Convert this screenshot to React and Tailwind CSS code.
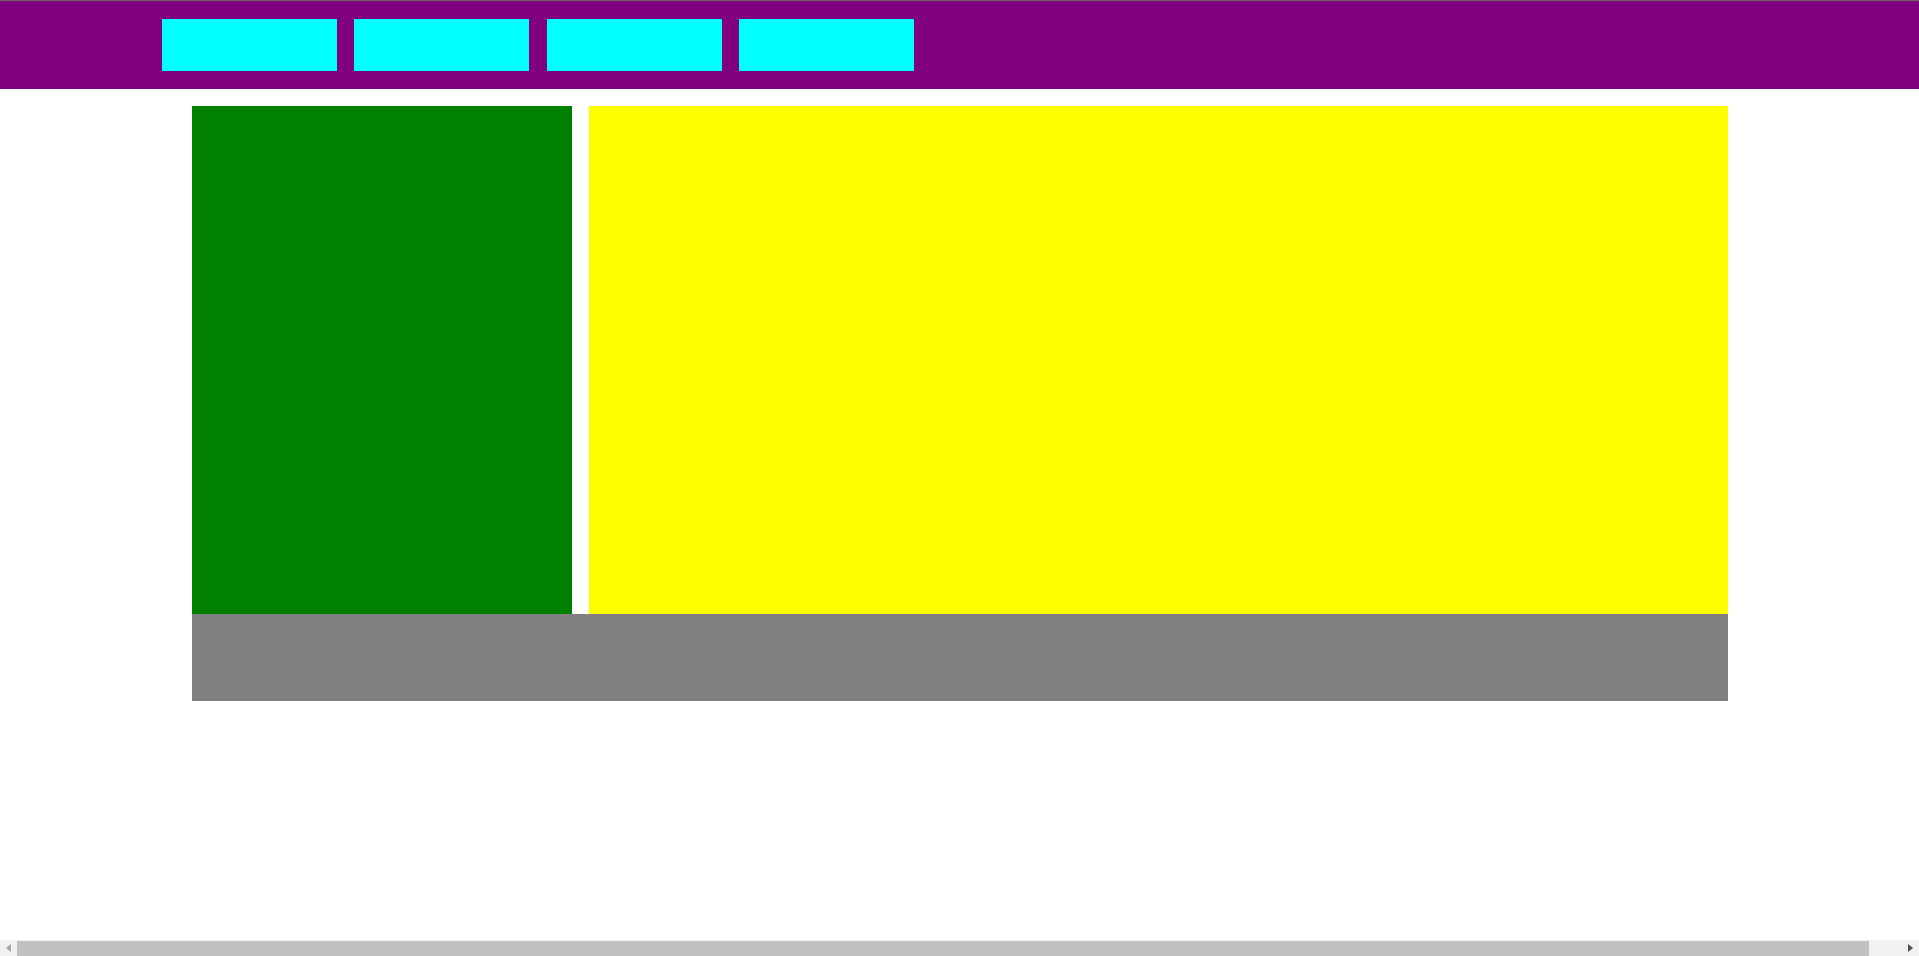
function Arrow({ dir, color }) {
  return (
    <svg width="5" height="8" viewBox="0 0 5 8">
      <path d={dir === 'left' ? 'M5 0 L0 4 L5 8 Z' : 'M0 0 L5 4 L0 8 Z'} fill={color} />
    </svg>
  );
}

export default function App() {
  const tabs = [0, 1, 2, 3];

  return (
    <div className="h-screen flex flex-col overflow-hidden bg-white">
      <div className="flex-1">
        {/* Top bar, a bit wider than the window */}
        <header className="w-[1953px] h-[89px] border-t border-[#666666] bg-[#800080] flex items-start gap-[17.3px] pl-[162px] pt-[18px]">
          {tabs.map((t) => (
            <div key={t} className="w-[175px] h-[52px] bg-[#00ffff]" />
          ))}
        </header>

        <main className="w-[1536px] ml-[192px] mt-[17px] flex flex-col">
          <div className="flex gap-[17px] h-[508px]">
            <aside className="w-[380px] bg-[#008000]" />
            <section className="flex-1 bg-[#ffff00]" />
          </div>
          <footer className="h-[87px] bg-[#808080]" />
        </main>
      </div>

      {/* horizontal scrollbar */}
      <div className="h-[16px] bg-[#f1f1f1] flex items-stretch">
        <div className="w-[17px] flex items-center justify-center">
          <Arrow dir="left" color="#a3a3a3" />
        </div>
        <div className="flex-1 flex pt-[1px]">
          <div className="w-[1852px] bg-[#c1c1c1]" />
        </div>
        <div className="w-[17px] flex items-center justify-center">
          <Arrow dir="right" color="#505050" />
        </div>
      </div>
    </div>
  );
}
